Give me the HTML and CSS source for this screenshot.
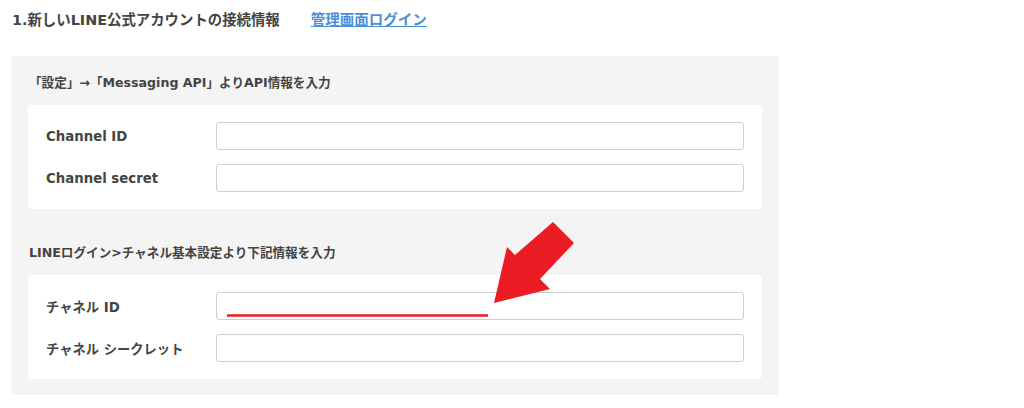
FILE: index.html
```html
<!DOCTYPE html>
<html lang="ja">
<head>
    <meta charset="UTF-8">
    <meta name="viewport" content="width=device-width, initial-scale=1.0">
    <title>LINE公式アカウント設定</title>
    <link rel="stylesheet" href="styles.css">
</head>
<body>
    <div class="page">
        <!-- 見出し -->
        <div class="heading">
            <h2>1.新しいLINE公式アカウントの接続情報</h2>
            <a href="#" class="admin-link">管理画面ログイン</a>
        </div>

        <div class="panel">
            <!-- Messaging API -->
            <div class="section">
                <p class="section-title">「設定」→「Messaging API」よりAPI情報を入力</p>
                <div class="card">
                    <div class="row">
                        <label for="channelId">Channel ID</label>
                        <input type="text" id="channelId">
                    </div>
                    <div class="row">
                        <label for="channelSecret">Channel secret</label>
                        <input type="text" id="channelSecret">
                    </div>
                </div>
            </div>

            <!-- LINEログイン -->
            <div class="section">
                <p class="section-title">LINEログイン&gt;チャネル基本設定より下記情報を入力</p>
                <div class="card">
                    <div class="row">
                        <label for="loginChannelId">チャネル ID</label>
                        <input type="text" id="loginChannelId">
                    </div>
                    <div class="row">
                        <label for="loginSecret">チャネル シークレット</label>
                        <input type="text" id="loginSecret">
                    </div>
                </div>
            </div>
        </div>

        <!-- 注釈の矢印 -->
        <svg class="annotation" width="1024" height="408" viewBox="0 0 1024 408">
            <line x1="227" y1="315.5" x2="488" y2="315.5" stroke="#ec1c24" stroke-width="2.6"/>
            <polygon fill="#ec1c24" points="494,303 507,247 515,255 553,222 574,243 540,279 550,289"/>
        </svg>
    </div>
</body>
</html>
```

FILE: styles.css
```css
/* 全体 */
body {
    margin: 0;
    padding: 0;
    background: #fff;
    font-family: "DejaVu Sans", "Noto Sans CJK JP", sans-serif;
    color: #444;
}

.page {
    position: relative;
    width: 1024px;
    height: 408px;
    overflow: hidden;
}

.heading {
    display: flex;
    align-items: center;
    gap: 31px;
    padding: 10px 0 0 12px;
    height: 20px;
}

.heading h2 {
    margin: 0;
    font-size: 14.4px;
    font-weight: 700;
    line-height: 20px;
    color: #444;
}

.admin-link {
    font-size: 14.5px;
    font-weight: 700;
    line-height: 20px;
    color: #4a90d9;
    text-decoration: underline;
}

.panel {
    margin: 26px 0 0 11px;
    width: 734px;
    padding: 17px 17px 16px;
    background: #f4f4f4;
    border-radius: 4px;
}

.section + .section {
    margin-top: 34px;
}

.section-title {
    margin: 0 0 12px 1px;
    font-size: 12.6px;
    font-weight: 700;
    line-height: 20px;
    color: #444;
}

.card {
    background: #fff;
    border-radius: 4px;
    padding: 17px 18px;
    display: flex;
    flex-direction: column;
    gap: 14px;
}

.row {
    display: flex;
    align-items: center;
}

.row label {
    width: 170px;
    flex-shrink: 0;
    font-size: 13.3px;
    font-weight: 700;
    color: #444;
}

.row input {
    flex: 1;
    height: 28px;
    box-sizing: border-box;
    border: 1px solid #cfcfcf;
    border-radius: 3px;
    background: #fff;
    padding: 0 8px;
}

.annotation {
    position: absolute;
    top: 0;
    left: 0;
    pointer-events: none;
}
```
